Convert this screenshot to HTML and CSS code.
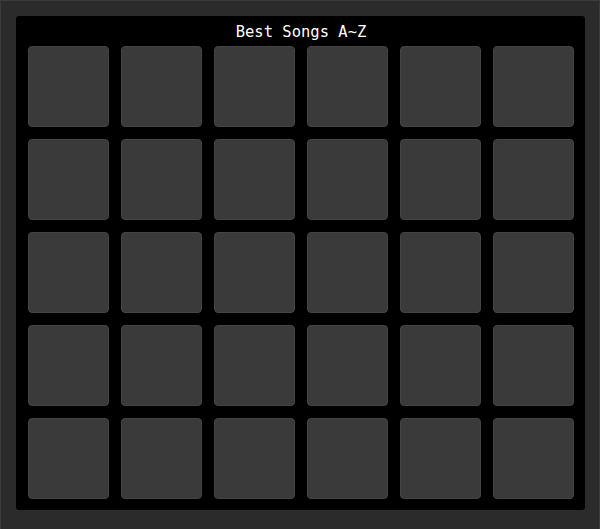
FILE: index.html
```html
<!DOCTYPE html>
<html lang="en">
<head>
    <meta charset="UTF-8">
    <meta name="viewport" content="width=device-width, initial-scale=1.0">
    <title>Best Songs A~Z</title>
    <link rel="stylesheet" href="styles.css">
</head>
<body>
    <div class="frame">
        <div class="board">
            <h2 class="board-title">Best Songs A~Z</h2>
            <div class="grid">
                <div class="tile"></div><div class="tile"></div><div class="tile"></div>
                <div class="tile"></div><div class="tile"></div><div class="tile"></div>
                <div class="tile"></div><div class="tile"></div><div class="tile"></div>
                <div class="tile"></div><div class="tile"></div><div class="tile"></div>
                <div class="tile"></div><div class="tile"></div><div class="tile"></div>
                <div class="tile"></div><div class="tile"></div><div class="tile"></div>
                <div class="tile"></div><div class="tile"></div><div class="tile"></div>
                <div class="tile"></div><div class="tile"></div><div class="tile"></div>
                <div class="tile"></div><div class="tile"></div><div class="tile"></div>
                <div class="tile"></div><div class="tile"></div><div class="tile"></div>
            </div>
        </div>
    </div>
</body>
</html>
```

FILE: styles.css
```css
* {
    box-sizing: border-box;
    margin: 0;
    padding: 0;
}

html, body {
    height: 100%;
}

body {
    background-color: #2b2b2b;
    font-family: "DejaVu Sans Mono", monospace;
}

.frame {
    height: 529px;
    border: 1px solid #3a3a3a;
    border-bottom: none;
    padding: 15px 14px 0 15px;
}

.board {
    width: 569px;
    background-color: #000;
    border-radius: 3px;
    padding: 0 11px 11px 12px;
}

.board-title {
    height: 30px;
    line-height: 32px;
    text-align: center;
    color: #fff;
    font-size: 15.5px;
    font-weight: normal;
}

.grid {
    display: grid;
    grid-template-columns: repeat(6, 81px);
    grid-auto-rows: 81px;
    column-gap: 12px;
    row-gap: 12px;
}

.tile {
    background-color: #3a3a3a;
    border: 1px solid #444;
    border-radius: 4px;
}
```
